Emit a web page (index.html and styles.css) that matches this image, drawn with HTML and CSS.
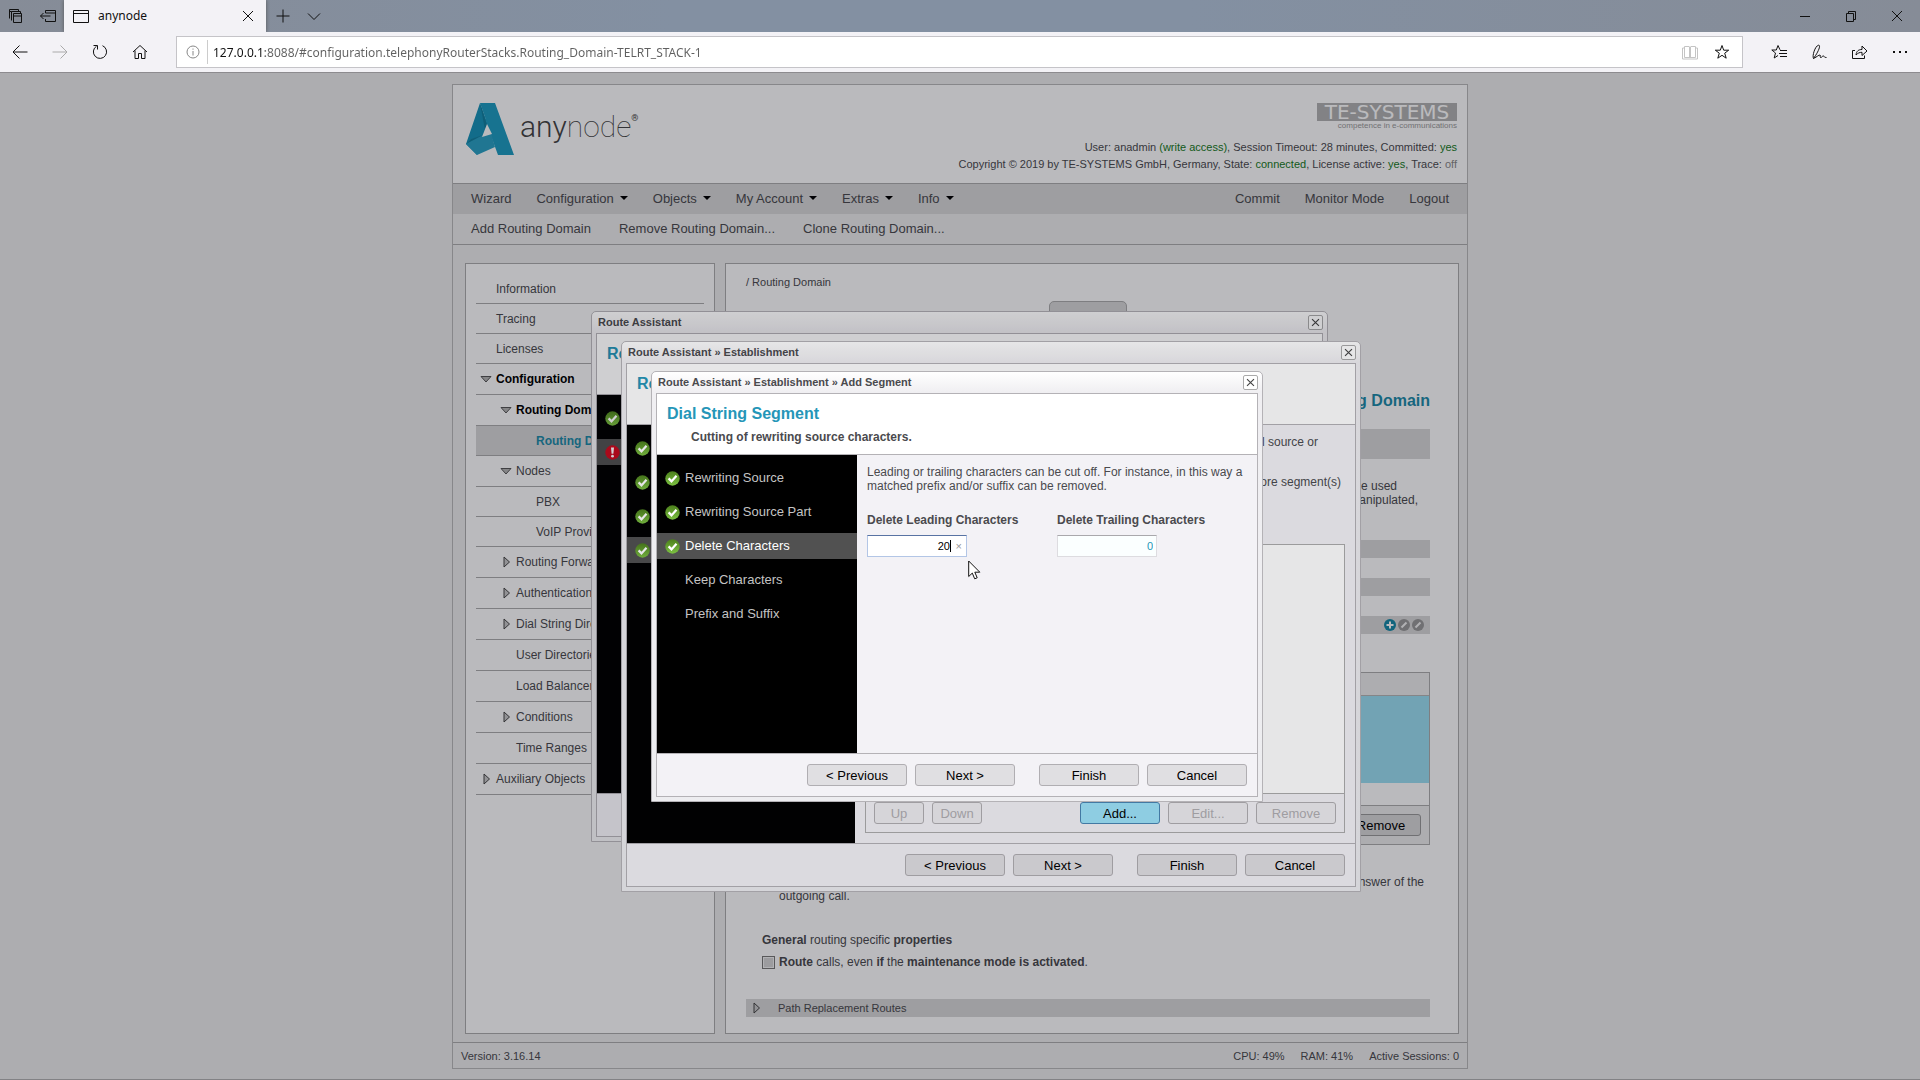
FILE: index.html
```html
<!DOCTYPE html>
<html lang="en">
<head>
    <meta charset="utf-8">
    <title>anynode</title>
    <link rel="stylesheet" href="styles.css">
</head>
<body>
    <!-- shared icons -->
    <svg class="defs" width="0" height="0" aria-hidden="true">
        <defs>
            <linearGradient id="green" x1="0" y1="0" x2="0" y2="1">
                <stop offset="0" stop-color="#4c7f1c"/>
                <stop offset="1" stop-color="#7cc142"/>
            </linearGradient>
            <symbol id="ok" viewBox="0 0 15 15">
                <circle cx="7.5" cy="7.5" r="7.2" fill="url(#green)"/>
                <path d="M3.6 7.4l2.9 3 5-5.6" fill="none" stroke="#fff" stroke-width="2.3"/>
            </symbol>
            <symbol id="alert" viewBox="0 0 15 15">
                <circle cx="7.5" cy="7.5" r="7.2" fill="#d2091e"/>
                <path d="M6 2.5h3l-.6 6.2H6.6z" fill="#fff"/>
                <circle cx="7.5" cy="11.2" r="1.4" fill="#fff"/>
            </symbol>
            <symbol id="close" viewBox="0 0 15 15">
                <path d="M3.5 3.5l8 8M11.5 3.5l-8 8" fill="none" stroke="#444" stroke-width="1.3"/>
            </symbol>
            <symbol id="open" viewBox="0 0 12 12">
                <path d="M1 3.5h10L6 9z" fill="#b5b5b5" stroke="#555"/>
            </symbol>
            <symbol id="shut" viewBox="0 0 12 12">
                <path d="M4 1v10l5.500-5z" fill="#c8c8c8" stroke="#444"/>
            </symbol>
        </defs>
    </svg>

    <header class="browser">
        <div class="tabbar">
            <button class="tool" aria-label="Tabs you've set aside"><svg width="16" height="16" viewBox="0 0 16 16"><path d="M1.500 10.500v-9h9v2M3.500 12.500v-9h9v2M1.500 3.500h2M5.500 5.500h8v9h-8zM5.500 8h8"/></svg></button>
            <button class="tool" aria-label="Set these tabs aside"><svg width="18" height="16" viewBox="0 0 18 16"><path d="M6.500 5V2.500h10v11h-10V11M6.500 5h10M1.500 8h10M4.500 5l-3 3 3 3"/></svg></button>
            <div class="tab">
                <svg width="16" height="16" viewBox="0 0 16 16"><path d="M.5 2.500h15v12H.5zM.5 5.500h15"/></svg>
                <span class="tab-title">anynode</span>
                <button class="tab-close" aria-label="Close tab"><svg width="12" height="12" viewBox="0 0 12 12"><path d="M1 1l10 10M11 1L1 11"/></svg></button>
            </div>
            <button class="tool" aria-label="New tab"><svg width="14" height="14" viewBox="0 0 14 14"><path d="M7 .5v13M.5 7h13"/></svg></button>
            <button class="tool" aria-label="Tab previews"><svg width="14" height="14" viewBox="0 0 14 14"><path d="M1 4.500l6 6 6-6"/></svg></button>
            <div class="window-buttons">
                <button aria-label="Minimize"><svg width="12" height="12" viewBox="0 0 12 12"><path d="M1 6.500h10"/></svg></button>
                <button aria-label="Restore"><svg width="12" height="12" viewBox="0 0 12 12"><path d="M1.500 3.500h7v8h-7zM3.500 3.500v-2h7v8h-2"/></svg></button>
                <button aria-label="Close"><svg width="12" height="12" viewBox="0 0 12 12"><path d="M1 1l10 10M11 1L1 11"/></svg></button>
            </div>
        </div>
        <div class="addressbar">
            <button class="go" aria-label="Back"><svg width="16" height="16" viewBox="0 0 16 16"><path d="M15.500 8H1M7.500 1.500L1 8l6.500 6.500"/></svg></button>
            <button class="go off" aria-label="Forward"><svg width="16" height="16" viewBox="0 0 16 16"><path d="M.5 8H15M8.500 1.500L15 8l-6.500 6.500"/></svg></button>
            <button class="go" aria-label="Refresh"><svg width="16" height="16" viewBox="0 0 16 16"><path d="M10.500 1.700A6.600 6.600 0 1 1 4.500 2.200M1.500 1.500h4v4"/></svg></button>
            <button class="go" aria-label="Home"><svg width="16" height="16" viewBox="0 0 16 16"><path d="M1 8l7-6.500L15 8M3 6.500v8h3.500v-5h3v5H13v-8"/></svg></button>
            <div class="location">
                <svg class="pale" width="14" height="14" viewBox="0 0 14 14"><circle cx="7" cy="7" r="6"/><path d="M7 6v4.500M7 3.500v1.200"/></svg>
                <input class="url" type="text" aria-label="Address" value="127.0.0.1:8088/#configuration.telephonyRouterStacks.Routing_Domain-TELRT_STACK-1">
                <button class="paler" aria-label="Reading view"><svg width="16" height="16" viewBox="0 0 16 16"><path d="M7.500 3V14M8.500 3V14M7.500 2.500h-5v11h5M8.500 2.500h5v11h-5M2.500 4h-2v11h15V4h-2"/></svg></button>
                <button aria-label="Add to favorites"><svg width="16" height="16" viewBox="0 0 16 16"><path d="M8 1.500l1.700 4.700h5l-4 3 1.500 5L8 11.300l-4.200 2.900 1.500-5-4-3h5z"/></svg></button>
            </div>
            <div class="hub">
                <button aria-label="Hub"><svg width="16" height="16" viewBox="0 0 16 16"><path d="M9 5.800L7 1.500 5.300 6H.8l3.700 3-1.300 5L7 11.500M9 6.500h7M8 9.500h8M9 12.500h7"/></svg></button>
                <button aria-label="Add notes"><svg width="18" height="16" viewBox="0 0 18 16"><path d="M3.500 14.500C2 12 5 2 8.500 1.200c3-.2-1 8-5 13.300zm0 0c4-2 5-3.500 6.500-3.500 1 .2-.5 2 .5 2.500s2-2 3-1.500.5 1.500 3 1.500"/></svg></button>
                <button aria-label="Share"><svg width="18" height="16" viewBox="0 0 18 16"><path d="M4 6.500H1.500v8h12v-3M5 11c.5-4 2.500-5.500 6-5.500V2l5 5-5 4.500V8.300C8.500 8.300 7 9 5 11z"/></svg></button>
                <button aria-label="More"><svg width="16" height="16" viewBox="0 0 16 16"><path d="M1 8h2M7 8h2M13 8h2" stroke-width="2"/></svg></button>
            </div>
        </div>
    </header>

    <div class="viewport">
        <div class="page">
            <div class="app">
                <div class="banner">
                    <div class="logo">
                        <svg width="48" height="52" viewBox="0 0 48 52">
                            <path d="M14 0L0 41l11 11 5-17 10-3-4-10z" fill="#1793b8"/>
                            <path d="M14 0h15l19 52H32L21 22l-2-8z" fill="#1e9cc1"/>
                            <path d="M0 41l5-5 20-6 4 14-18 8z" fill="#2aa1c4"/>
                            <path d="M14 0l7 22-2 5z" fill="#127f9f"/>
                            <path d="M0 41l5-5 12-4z" fill="#127f9f"/>
                            <path d="M21 21l5 10-10 3z" fill="#fff"/>
                        </svg>
                        <span class="logo-text"><b>any</b>node<sup>®</sup></span>
                    </div>
                    <div class="status">
                        <div class="vendor">TE-SYSTEMS</div>
                        <div class="slogan">competence in e-communications</div>
                        <div>User: anadmin <em>(write access)</em>, Session Timeout: 28 minutes, Committed: <em>yes</em></div>
                        <div>Copyright © 2019 by TE-SYSTEMS GmbH, Germany, State: <em>connected</em>, License active: <em>yes</em>, Trace: <span class="muted">off</span></div>
                    </div>
                </div>
                <nav class="menu">
                    <a href="#">Wizard</a>
                    <a href="#" class="drop">Configuration</a>
                    <a href="#" class="drop">Objects</a>
                    <a href="#" class="drop">My Account</a>
                    <a href="#" class="drop">Extras</a>
                    <a href="#" class="drop">Info</a>
                    <a href="#" class="first-right">Commit</a>
                    <a href="#">Monitor Mode</a>
                    <a href="#">Logout</a>
                </nav>
                <nav class="menu submenu">
                    <a href="#">Add Routing Domain</a>
                    <a href="#">Remove Routing Domain...</a>
                    <a href="#">Clone Routing Domain...</a>
                </nav>

                <div class="content">
                    <nav class="tree">
                        <a href="#">Information</a>
                        <a href="#">Tracing</a>
                        <a href="#">Licenses</a>
                        <a href="#" class="tall strong"><svg><use href="#open"/></svg>Configuration</a>
                        <a href="#" class="tall strong level2"><svg><use href="#open"/></svg>Routing Domains</a>
                        <a href="#" class="level3 current">Routing Domain</a>
                        <a href="#" class="tall level2"><svg><use href="#open"/></svg>Nodes</a>
                        <a href="#" class="level3">PBX</a>
                        <a href="#" class="level3">VoIP Provider</a>
                        <a href="#" class="tall level2"><svg><use href="#shut"/></svg>Routing Forward</a>
                        <a href="#" class="tall level2"><svg><use href="#shut"/></svg>Authentication</a>
                        <a href="#" class="tall level2"><svg><use href="#shut"/></svg>Dial String Directories</a>
                        <a href="#" class="tall level2">User Directories</a>
                        <a href="#" class="tall level2">Load Balancers</a>
                        <a href="#" class="tall level2"><svg><use href="#shut"/></svg>Conditions</a>
                        <a href="#" class="tall level2">Time Ranges</a>
                        <a href="#" class="tall"><svg><use href="#shut"/></svg>Auxiliary Objects</a>
                    </nav>

                    <main class="panel">
                        <div class="crumb">/ Routing Domain</div>
                        <div class="panel-tab"></div>
                        <h1>Routing Domain</h1>
                        <div class="bar bar-big"></div>
                        <p class="hint"><span class="short">be used</span><span class="mid">manipulated,</span></p>
                        <div class="bar"></div>
                        <div class="bar"></div>
                        <div class="bar bar-tools">
                            <button aria-label="Add"><svg width="12" height="12" viewBox="0 0 12 12"><circle cx="6" cy="6" r="6" fill="#1588a6"/><path d="M6 2.500v7M2.500 6h7" stroke="#fff" stroke-width="2"/></svg></button>
                            <button aria-label="Edit"><svg width="12" height="12" viewBox="0 0 12 12"><circle cx="6" cy="6" r="6" fill="#999"/><path d="M3.500 8.500l5-5" stroke="#f2f2f2" stroke-width="2"/></svg></button>
                            <button aria-label="Edit all"><svg width="12" height="12" viewBox="0 0 12 12"><circle cx="6" cy="6" r="6" fill="#999"/><path d="M3.500 8.500l5-5" stroke="#f2f2f2" stroke-width="2"/></svg></button>
                        </div>
                        <div class="routes">
                            <div class="routes-head"></div>
                            <div class="routes-row"></div>
                            <div class="routes-blank"></div>
                            <div class="routes-foot"><button class="btn small">Remove</button></div>
                        </div>
                        <p class="answer"><span class="near">answer of the</span><span class="left">outgoing call.</span></p>
                        <p class="general"><b>General</b> routing specific <b>properties</b></p>
                        <div class="check">
                            <input type="checkbox" id="maintenance">
                            <label for="maintenance"><b>Route</b> calls, even <b>if</b> the <b>maintenance mode is activated</b>.</label>
                        </div>
                        <div class="bar bar-path"><svg width="12" height="12"><use href="#shut"/></svg>Path Replacement Routes</div>
                    </main>
                </div>

                <footer class="info">
                    <span>Version: 3.16.14</span>
                    <span class="first-right">CPU: 49%</span>
                    <span>RAM: 41%</span>
                    <span>Active Sessions: 0</span>
                </footer>
            </div>
        </div>

        <!-- dialogs, each one dims everything below it -->
        <div class="shade">
            <section class="dialog dialog-1">
                <div class="dialog-title">Route Assistant<button class="x" aria-label="Close"><svg><use href="#close"/></svg></button></div>
                <div class="dialog-box">
                    <div class="dialog-head"><h2>Ro</h2></div>
                    <div class="dialog-body">
                        <ul class="steps">
                            <li><svg><use href="#ok"/></svg></li>
                            <li class="on"><svg><use href="#alert"/></svg></li>
                        </ul>
                    </div>
                    <div class="dialog-foot"></div>
                </div>
            </section>
        </div>

        <div class="shade">
            <section class="dialog dialog-2">
                <div class="dialog-title">Route Assistant » Establishment<button class="x" aria-label="Close"><svg><use href="#close"/></svg></button></div>
                <div class="dialog-box">
                    <div class="dialog-head"><h2>Ro</h2></div>
                    <div class="dialog-body">
                        <ul class="steps">
                            <li><svg><use href="#ok"/></svg></li>
                            <li><svg><use href="#ok"/></svg></li>
                            <li><svg><use href="#ok"/></svg></li>
                            <li class="on"><svg><use href="#ok"/></svg></li>
                        </ul>
                        <div class="form segments">
                            <p class="seg-top">dial source or</p>
                            <p class="seg-next">more segment(s)</p>
                            <div class="list">
                                <div class="list-rows"></div>
                                <div class="list-foot">
                                    <button class="btn tiny" disabled>Up</button>
                                    <button class="btn tiny" disabled>Down</button>
                                    <button class="btn small primary first-right">Add...</button>
                                    <button class="btn small" disabled>Edit...</button>
                                    <button class="btn small" disabled>Remove</button>
                                </div>
                            </div>
                        </div>
                    </div>
                    <div class="dialog-foot">
                        <button class="btn">&lt; Previous</button>
                        <button class="btn">Next &gt;</button>
                        <button class="btn apart">Finish</button>
                        <button class="btn">Cancel</button>
                    </div>
                </div>
            </section>
        </div>

        <div class="shade">
            <section class="dialog dialog-3">
                <div class="dialog-title">Route Assistant » Establishment » Add Segment<button class="x" aria-label="Close"><svg><use href="#close"/></svg></button></div>
                <div class="dialog-box">
                    <div class="dialog-head">
                        <h2>Dial String Segment</h2>
                        <p>Cutting of rewriting source characters.</p>
                    </div>
                    <div class="dialog-body">
                        <ul class="steps">
                            <li><svg><use href="#ok"/></svg>Rewriting Source</li>
                            <li><svg><use href="#ok"/></svg>Rewriting Source Part</li>
                            <li class="on"><svg><use href="#ok"/></svg>Delete Characters</li>
                            <li class="todo">Keep Characters</li>
                            <li class="todo">Prefix and Suffix</li>
                        </ul>
                        <div class="form">
                            <p>Leading or trailing characters can be cut off. For instance, in this way a matched prefix and/or suffix can be removed.</p>
                            <div class="fields">
                                <div class="field">
                                    <label for="leading">Delete Leading Characters</label>
                                    <div class="entry">
                                        <input class="focused" type="text" id="leading" value="20">
                                        <span class="caret"></span>
                                        <button class="clear" aria-label="Clear">×</button>
                                    </div>
                                </div>
                                <div class="field">
                                    <label for="trailing">Delete Trailing Characters</label>
                                    <div class="entry"><input type="text" id="trailing" value="0"></div>
                                </div>
                            </div>
                        </div>
                    </div>
                    <div class="dialog-foot">
                        <button class="btn">&lt; Previous</button>
                        <button class="btn">Next &gt;</button>
                        <button class="btn apart">Finish</button>
                        <button class="btn">Cancel</button>
                    </div>
                </div>
            </section>
        </div>

        <svg class="cursor" width="13" height="20" viewBox="0 0 13 20"><path d="M.7 1v15.500l3.600-3.400 2.400 5.700 2.500-1-2.400-5.600h5z" fill="#fff" stroke="#111"/></svg>
    </div>
</body>
</html>
```
FILE: styles.css
```css
* {
    box-sizing: border-box;
}

body {
    font-family: "Liberation Sans", Arial, sans-serif;
    font-size: 12px;
    line-height: 14px;
    color: #4a4a4e;
    margin: 0;
    height: 100vh;
    display: flex;
    flex-direction: column;
    overflow: hidden;
}

h1, h2, p, ul {
    margin: 0;
    padding: 0;
}

a {
    color: inherit;
    text-decoration: none;
}

button {
    font-family: inherit;
    padding: 0;
    border: none;
    background: none;
}

.defs {
    position: absolute;
}

.first-right {
    margin-left: auto;
}

/* browser frame */
.browser {
    font-family: "Noto Sans", sans-serif;
    background-color: #f3f2f6;
    border-bottom: 1px solid #8d8b8f;
}

.browser svg {
    display: block;
    fill: none;
    stroke: #111;
}

.tabbar {
    display: flex;
    align-items: center;
    height: 32px;
    padding-left: 8px;
    background: linear-gradient(to right, #868c97, #8390a2 35%, #8390a2 62%, #868c97);
}

.tool {
    margin-right: 15px;
}

.tool + .tool {
    margin-right: 7px;
}

.tab {
    display: flex;
    align-items: center;
    width: 202px;
    height: 32px;
    padding: 0 12px 0 9px;
    margin-right: 10px;
    background-color: #f3f2f6;
    box-shadow: 0 0 4px #555;
    clip-path: inset(0 -4px);
}

.tab-title {
    margin-left: 9px;
    color: #111;
}

.tab-close {
    margin-left: auto;
}

.tab + .tool {
    margin-right: 17px;
}

.window-buttons {
    display: flex;
    gap: 34px;
    margin-left: auto;
    padding-right: 17px;
}

.addressbar {
    display: flex;
    align-items: center;
    height: 40px;
    padding: 0 12px;
}

.go {
    width: 16px;
    margin-right: 24px;
}

.off svg {
    stroke: #aaa;
}

.location {
    display: flex;
    align-items: center;
    flex: 1;
    height: 32px;
    margin-left: 4px;
    padding: 0 12px 0 9px;
    gap: 7px;
    background-color: #fff;
    border: 1px solid #c5c4c8;
}

.location button {
    margin-left: 9px;
}

.location .pale {
    stroke: #888;
}

.paler svg {
    stroke: #c4c4c4;
}

/* host part of the address is darker than the path */
.url {
    flex: 1;
    height: 24px;
    border: none;
    border-left: 1px solid #ccc;
    padding: 0 0 0 5px;
    outline: none;
    font-family: "Noto Sans", sans-serif;
    font-size: 12px;
    background: linear-gradient(to right, #111 57px, #606060 57px);
    background-clip: text;
    -webkit-background-clip: text;
    -webkit-text-fill-color: transparent;
}

.hub {
    display: flex;
    gap: 23px;
    padding-left: 28px;
}

/* anynode page */
.viewport {
    position: relative;
    flex: 1;
    overflow: hidden;
}

.page {
    height: 100%;
    padding: 11px 0 10px;
    display: flex;
    justify-content: center;
    background-color: #ededed;
    border-bottom: 1px solid #b2b2b2;
}

.app {
    display: flex;
    flex-direction: column;
    width: 1016px;
    border: 1px solid #b8b8b8;
}

.banner {
    display: flex;
    flex: none;
    justify-content: space-between;
    height: 99px;
    padding: 18px 10px 0 13px;
    background-color: #fff;
    border-bottom: 1px solid #acacac;
}

.logo {
    display: flex;
    align-items: flex-start;
    gap: 6px;
}

.logo-text {
    font-family: Roboto, sans-serif;
    font-size: 30px;
    font-weight: 100;
    line-height: 48px;
    color: #444;
}

.logo-text b {
    font-weight: 300;
}

.logo-text sup {
    font-size: 9px;
    font-weight: 400;
    line-height: 9px;
    vertical-align: 16px;
}

.status {
    font-size: 11px;
    line-height: 17px;
    text-align: right;
}

.status em {
    font-style: normal;
    color: #167a1c;
}

.muted {
    color: #888;
}

.vendor {
    display: table;
    margin-left: auto;
    width: 140px;
    font-family: "DejaVu Sans", sans-serif;
    font-size: 20px;
    line-height: 18px;
    text-align: center;
    background-color: #b2b2b2;
    color: #fff;
}

.slogan {
    font-size: 8px;
    line-height: 10px;
    margin-bottom: 8px;
    color: #999;
}

.menu {
    display: flex;
    flex: none;
    align-items: center;
    gap: 25px;
    height: 30px;
    padding: 0 18px;
    font-size: 13px;
    background-color: #d7d7d7;
}

.drop::after {
    content: "";
    display: inline-block;
    margin-left: 6px;
    vertical-align: 3px;
    border: 4px solid transparent;
    border-top-color: #000;
    border-bottom: none;
}

.submenu {
    gap: 28px;
    height: 31px;
    background-color: #ededed;
    border-bottom: 1px solid #acacac;
}

.content {
    display: flex;
    flex: 1;
    gap: 10px;
    padding: 18px 8px 8px 12px;
}

.tree {
    width: 250px;
    padding: 10px;
    background-color: #fff;
    border: 1px solid #acacac;
}

.tree a {
    display: flex;
    align-items: center;
    height: 30px;
    padding-left: 20px;
    border-bottom: 1px solid #acacac;
}

.tree .tall {
    height: 31px;
}

.tree .level2 {
    padding-left: 40px;
}

.tree .level3 {
    padding-left: 60px;
}

.tree svg {
    width: 12px;
    height: 12px;
    margin-left: -16px;
    margin-right: 4px;
}

.tree .strong {
    font-weight: bold;
    color: #000;
}

.tree .current {
    font-weight: bold;
    color: #1c8ba9;
    background-color: #d7d7d7;
}

.panel {
    flex: 1;
    padding: 11px 28px 0 20px;
    background-color: #fff;
    border: 1px solid #acacac;
}

.crumb {
    font-size: 11px;
}

.panel-tab {
    width: 78px;
    height: 30px;
    margin: 12px 0 60px 303px;
    background-color: #d7d7d7;
    border: 1px solid #acacac;
    border-radius: 5px 5px 0 0;
}

h1 {
    font-size: 16px;
    line-height: 20px;
    text-align: right;
    color: #1c8ba9;
}

.bar {
    height: 18px;
    margin-bottom: 20px;
    background-color: #d7d7d7;
}

.bar-big {
    height: 30px;
    margin-top: 18px;
}

.hint {
    margin-bottom: 33px;
}

.hint span, .answer span {
    display: block;
    text-align: right;
}

.hint .short {
    padding-right: 33px;
}

.hint .mid {
    padding-right: 12px;
}

.bar-tools {
    display: flex;
    align-items: center;
    justify-content: flex-end;
    gap: 2px;
    padding-right: 6px;
    margin-bottom: 38px;
}

.bar-tools svg {
    display: block;
}

.routes {
    border: 1px solid #acacac;
}

.routes-head {
    height: 23px;
    background-color: #ededed;
    border-bottom: 1px solid #b5b5b5;
}

.routes-row {
    height: 87px;
    background-color: #9bdff3;
}

.routes-blank {
    height: 22px;
}

.routes-foot {
    display: flex;
    justify-content: flex-end;
    padding: 8px;
    border-top: 1px solid #acacac;
    background-color: #ededed;
}

.answer {
    margin: 30px 0;
}

.answer .near {
    padding-right: 6px;
}

.answer .left {
    padding-left: 33px;
    text-align: left;
}

.general {
    padding-left: 16px;
}

.check {
    display: flex;
    align-items: center;
    gap: 4px;
    margin: 8px 0 30px;
    padding-left: 16px;
}

.check input {
    appearance: none;
    width: 13px;
    height: 13px;
    margin: 0;
    border: 1px solid #777;
    background-color: #d5d5d5;
    box-shadow: inset 0 0 0 1px #f4f4f4;
}

.bar-path {
    display: flex;
    align-items: center;
    gap: 16px;
    margin-bottom: 0;
    padding-left: 4px;
    font-size: 11px;
}

.info {
    display: flex;
    flex: none;
    align-items: center;
    gap: 16px;
    height: 26px;
    padding: 0 8px;
    font-size: 11px;
    border-top: 1px solid #acacac;
}

/* dialogs */
.shade {
    position: absolute;
    inset: 0;
    background-color: rgba(12, 8, 16, 0.1);
}

.dialog {
    position: absolute;
    padding: 0 4px 4px;
    background: linear-gradient(to bottom, #fff, #f0eff2 20px, #ededf0);
    border: 1px solid #b4b2b6;
    border-radius: 5px 5px 0 0;
}

.dialog-1 {
    left: calc(50% - 369px);
    top: 238px;
    width: 737px;
}

.dialog-2 {
    left: calc(50% - 339px);
    top: 268px;
    width: 740px;
}

.dialog-3 {
    left: calc(50% - 309px);
    top: 298px;
    width: 612px;
}

.dialog-title {
    display: flex;
    justify-content: space-between;
    align-items: center;
    height: 21px;
    padding: 0 0 1px 2px;
    font-size: 11px;
    font-weight: bold;
}

.x {
    width: 15px;
    height: 15px;
    border: 1px solid #aaa;
    border-radius: 2px;
    background-color: #fff;
}

.x svg {
    display: block;
    width: 13px;
    height: 13px;
}

.dialog-box {
    border: 1px solid #b4b2b6;
    background-color: #f3f2f6;
}

.dialog-head {
    height: 61px;
    padding: 10px;
    background-color: #fff;
    border-bottom: 1px solid #b4b2b6;
}

.dialog-head h2 {
    font-size: 16px;
    line-height: 20px;
    color: #2596b8;
}

.dialog-head p {
    margin-top: 6px;
    padding-left: 24px;
    font-weight: bold;
}

.dialog-body {
    display: flex;
    min-height: 298px;
}

.dialog-1 .dialog-body {
    min-height: 398px;
}

.dialog-2 .dialog-body {
    min-height: 418px;
}

.steps {
    width: 200px;
    padding-top: 10px;
    list-style: none;
    font-size: 13px;
    color: #c4c4c4;
    background-color: #000;
}

.dialog-2 .steps {
    width: 228px;
}

.steps li {
    display: flex;
    align-items: center;
    gap: 5px;
    height: 26px;
    margin-bottom: 8px;
    padding-left: 8px;
}

.steps svg {
    width: 15px;
    height: 15px;
}

.steps .on {
    color: #fff;
    background-color: #515151;
}

.steps .todo {
    padding-left: 28px;
}

.form {
    flex: 1;
    padding: 10px;
}

.segments {
    display: flex;
    flex-direction: column;
}

.segments p {
    text-align: right;
}

.seg-top {
    padding-right: 27px;
    margin-bottom: 26px;
}

.seg-next {
    padding-right: 4px;
    margin-bottom: 55px;
}

.list {
    flex: 1;
    display: flex;
    flex-direction: column;
    border: 1px solid #acacac;
}

.list-rows {
    flex: 1;
    background-color: #fff;
    border-bottom: 1px solid #acacac;
}

.list-foot {
    display: flex;
    gap: 8px;
    padding: 8px;
}

.dialog-foot {
    display: flex;
    justify-content: flex-end;
    gap: 8px;
    min-height: 43px;
    padding: 10px;
    border-top: 1px solid #b4b2b6;
}

.btn {
    width: 100px;
    height: 22px;
    font-size: 13px;
    color: #000;
    background-color: #e0dfe2;
    border: 1px solid #b0aeb2;
    border-radius: 3px;
}

.btn:disabled {
    color: #b0aeb2;
    background-color: #eeedf0;
}

.small {
    width: 80px;
}

.tiny {
    width: 50px;
}

.apart {
    margin-left: 16px;
}

.primary {
    background-color: #9de4fa;
    border-color: #4a86b4;
}

.routes .btn {
    border-color: #999;
    background-color: #d7d7d7;
}

.fields {
    display: flex;
    gap: 30px;
    margin-top: 20px;
}

.field {
    width: 160px;
}

.field label {
    display: block;
    margin-bottom: 8px;
    font-weight: bold;
    white-space: nowrap;
}

.entry {
    position: relative;
    width: 100px;
}

.entry input {
    display: block;
    width: 100px;
    height: 22px;
    padding: 0 3px;
    font-family: inherit;
    font-size: 11px;
    text-align: right;
    color: #2596b8;
    background-color: #fbffff;
    border: 1px solid #dddce0;
    border-top-color: #a9a8ac;
    outline: none;
}

.entry .focused {
    padding-right: 16px;
    color: #000;
    background-color: #fff;
    border-color: #b3c6e6;
    border-top-color: #5873a3;
}

.caret {
    position: absolute;
    right: 16px;
    top: 5px;
    width: 1px;
    height: 12px;
    background-color: #000;
}

.clear {
    position: absolute;
    right: 5px;
    top: 4px;
    font-size: 11px;
    line-height: 14px;
    color: #999;
}

.cursor {
    position: absolute;
    left: calc(50% + 8px);
    top: 487px;
}
```
